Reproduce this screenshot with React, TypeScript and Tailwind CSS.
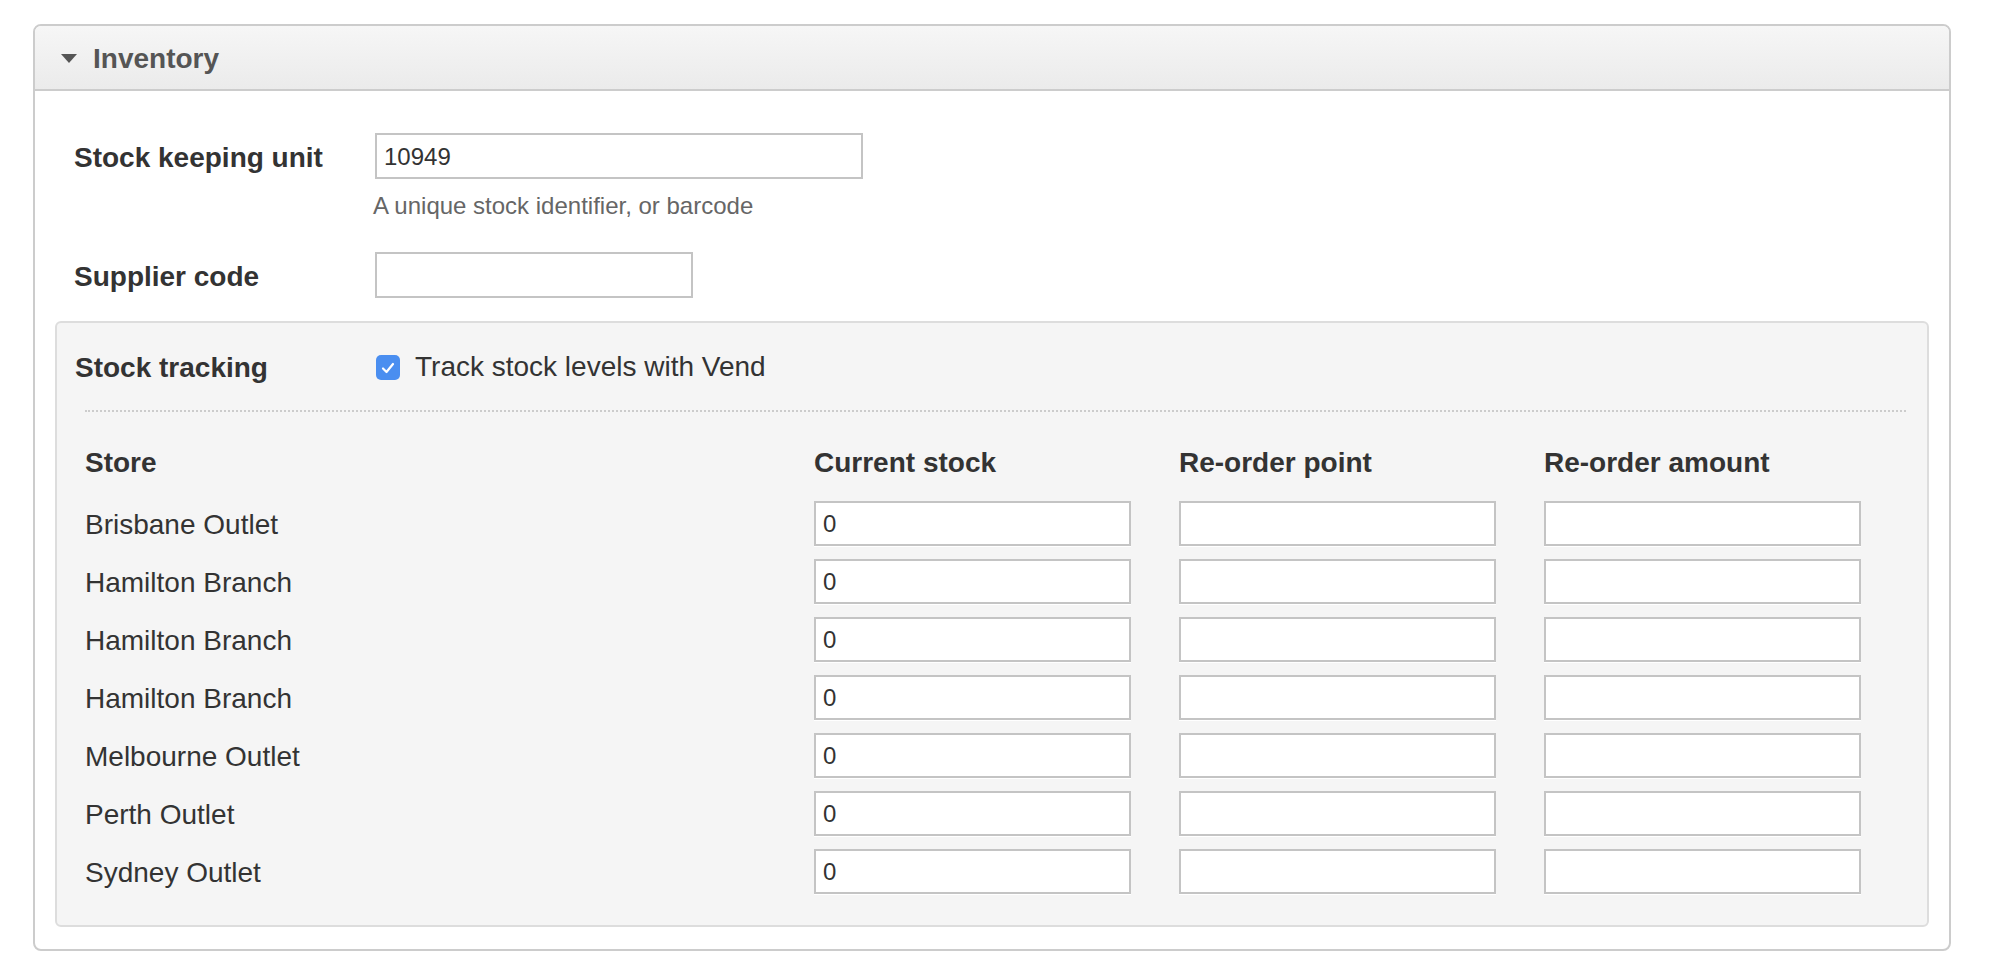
import React from "react";

const stores = [
  "Brisbane Outlet",
  "Hamilton Branch",
  "Hamilton Branch",
  "Hamilton Branch",
  "Melbourne Outlet",
  "Perth Outlet",
  "Sydney Outlet",
];

function Field({ className, value }: { className: string; value?: string }) {
  return (
    <div
      className={
        "flex items-center bg-white border-2 border-[#c4c4c4] shadow-[0_1px_0_#ffffff] pl-[7px] pt-[1px] text-[24px] text-[#333333] " +
        className
      }
    >
      {value}
    </div>
  );
}

export default function App() {
  return (
    <div className="min-h-screen bg-white pt-[24px] pl-[33px] font-['Liberation_Sans',Arial,sans-serif] text-[#333333]">
      <div className="w-[1918px] border-2 border-[#cccccc] rounded-[8px] overflow-hidden">
        <div className="h-[65px] flex items-center bg-gradient-to-b from-[#f6f6f6] to-[#ebebeb] border-b-2 border-[#cccccc] pl-[26px]">
          <svg width="16" height="9" viewBox="0 0 16 9" className="mt-[2px]">
            <path d="M0 0 L16 0 L8 9 Z" fill="#555555" />
          </svg>
          <span className="ml-[16px] pt-[2px] text-[28px] leading-[34px] font-bold text-[#555555]">Inventory</span>
        </div>
        <div className="px-[20px] pt-[42px] pb-[22px]">
          <div className="pl-[19px]">
            <div className="flex items-center">
              <div className="w-[301px] pt-[3px] text-[28px] leading-[34px] font-bold">Stock keeping unit</div>
              <Field className="w-[488px] h-[46px]" value="10949" />
            </div>
            <div className="ml-[299px] mt-[12px] text-[24px] leading-[30px] text-[#666666]">
              A unique stock identifier, or barcode
            </div>
            <div className="flex items-center mt-[31px]">
              <div className="w-[301px] pt-[3px] text-[28px] leading-[34px] font-bold">Supplier code</div>
              <Field className="w-[318px] h-[46px]" />
            </div>
          </div>
          <div className="mt-[23px] border-2 border-[#dddddd] rounded-[6px] bg-[#f5f5f5] pt-[26px] pb-[31px] pl-[18px] pr-[18px]">
            <div className="flex items-center h-[34px]">
              <div className="w-[301px] pt-[3px] text-[28px] leading-[34px] font-bold">Stock tracking</div>
              <div className="w-[24px] h-[25px] rounded-[5px] bg-[#4a8ef0] flex items-center justify-center mt-[3px]">
                <svg width="14" height="12" viewBox="0 0 14 12">
                  <path d="M2 6.5 L5.5 10 L12 2" fill="none" stroke="#ffffff" strokeWidth="2.2" strokeLinecap="round" strokeLinejoin="round" />
                </svg>
              </div>
              <span className="ml-[15px] pt-[1px] text-[28px] leading-[34px]">Track stock levels with Vend</span>
            </div>
            <div className="ml-[10px] mr-[3px]">
              <div className="mt-[27px] border-t-2 border-dotted border-[#cccccc]" />
              <div className="mt-[31px] grid grid-cols-[729px_365px_365px_365px] h-[34px] items-center pt-[3px] text-[28px] leading-[34px] font-bold">
                <div>Store</div>
                <div>Current stock</div>
                <div>Re-order point</div>
                <div>Re-order amount</div>
              </div>
              <div className="mt-[24px] flex flex-col gap-[13px]">
                {stores.map((s, i) => (
                  <div key={i} className="grid grid-cols-[729px_365px_365px_365px] items-center">
                    <div className="pt-[3px] text-[28px] leading-[34px]">{s}</div>
                    <Field className="w-[317px] h-[45px]" value="0" />
                    <Field className="w-[317px] h-[45px]" />
                    <Field className="w-[317px] h-[45px]" />
                  </div>
                ))}
              </div>
            </div>
          </div>
        </div>
      </div>
    </div>
  );
}
